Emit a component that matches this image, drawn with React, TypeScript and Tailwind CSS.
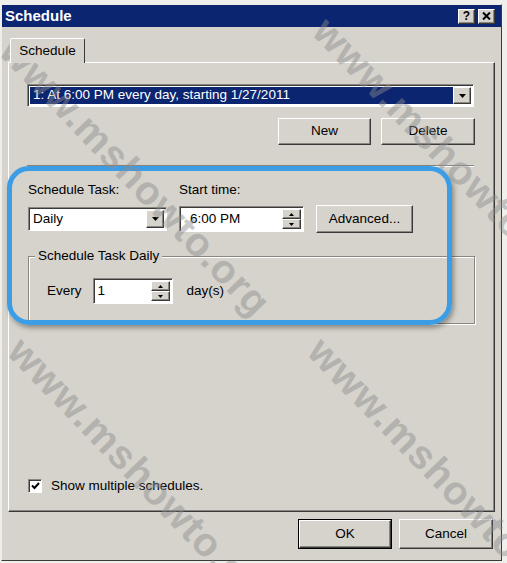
import React from "react";

const raised =
  "bg-[#d6d3cc] border border-t-white border-l-white border-b-[#3a3a3a] border-r-[#3a3a3a] shadow-[inset_-1px_-1px_0_#8a8780]";
const sunken =
  "bg-white border border-t-[#8a8780] border-l-[#8a8780] border-b-white border-r-white shadow-[inset_1px_1px_0_#3a3a3a]";

function DownTri({ w = 7, h = 4 }: { w?: number; h?: number }) {
  return (
    <svg width={w} height={h} viewBox={`0 0 ${w} ${h}`}>
      <polygon points={`0,0 ${w},0 ${w / 2},${h}`} fill="#000" />
    </svg>
  );
}
function UpTri({ w = 5, h = 3 }: { w?: number; h?: number }) {
  return (
    <svg width={w} height={h} viewBox={`0 0 ${w} ${h}`}>
      <polygon points={`0,${h} ${w},${h} ${w / 2},0`} fill="#000" />
    </svg>
  );
}

function ArrowBtn() {
  return (
    <div className={`${raised} w-[18px] h-full flex items-center justify-center`}>
      <DownTri />
    </div>
  );
}

function Spin() {
  return (
    <div className="w-[19px] h-full flex flex-col">
      <div className={`${raised} flex-1 flex items-center justify-center`}>
        <UpTri />
      </div>
      <div className={`${raised} flex-1 flex items-center justify-center`}>
        <DownTri w={5} h={3} />
      </div>
    </div>
  );
}

function Btn({ children, className = "" }: { children: React.ReactNode; className?: string }) {
  return (
    <div className={`${raised} flex items-center justify-center ${className}`}>{children}</div>
  );
}

function Watermark({ left, top }: { left: number; top: number }) {
  return (
    <div
      className="absolute pointer-events-none whitespace-nowrap font-['Liberation_Sans',Arial,sans-serif] font-bold text-[40px] leading-none text-[#8c8c8c] opacity-45 origin-top-left rotate-[46deg] tracking-[1px]"
      style={{ left, top }}
    >
      www.mshowto.org
    </div>
  );
}

export default function App() {
  return (
    <div className="relative w-[507px] h-[563px] overflow-hidden bg-[#efefec] font-['Liberation_Sans',Arial,sans-serif] text-[13.5px] text-black">
      <div className="h-[4px]" />
      <div className="ml-[1px] mr-[5px] h-[557px] bg-[#d6d3cc] border border-t-[#ececec] border-l-[#ececec] border-r-[#3a3a3a] border-b-[#3a3a3a] flex flex-col">
        {/* title bar */}
        <div className="h-[22px] bg-[#0c2570] flex items-center justify-between pl-[3px] pr-[6px]">
          <span className="text-white font-bold text-[15px] font-['Liberation_Sans',Arial,sans-serif]">
            Schedule
          </span>
          <div className="flex gap-[3px]">
            <div className={`${raised} w-[17px] h-[15px] flex items-center justify-center text-[12px] font-bold leading-none`}>?</div>
            <div className={`${raised} w-[17px] h-[15px] flex items-center justify-center`}>
              <svg width="9" height="8" viewBox="0 0 9 8">
                <path d="M1 0.5 L8 7.5 M8 0.5 L1 7.5" stroke="#000" strokeWidth="2" />
              </svg>
            </div>
          </div>
        </div>

        {/* tab */}
        <div className="mt-[11px] ml-[8px] relative z-10 w-[75px] h-[25px] -mb-[1px] bg-[#d6d3cc] border border-b-0 border-t-white border-l-white border-r-[#3a3a3a] rounded-t-[2px] flex items-center justify-center">
          Schedule
        </div>

        {/* panel */}
        <div className="ml-[6px] w-[487px] h-[450px] border border-t-white border-l-white border-r-[#3a3a3a] border-b-[#3a3a3a] shadow-[inset_-1px_-1px_0_#8a8780] flex flex-col">
          {/* schedule dropdown */}
          <div className={`${sunken} mt-[21px] ml-[18px] w-[447px] h-[23px] flex items-stretch p-[2px]`}>
            <div className="flex-1 bg-[#0c2570] text-white flex items-center pl-[3px]">
              1: At 6:00 PM every day, starting 1/27/2011
            </div>
            <ArrowBtn />
          </div>
          {/* New / Delete */}
          <div className="mt-[11px] flex justify-end gap-[10px] pr-[19px]">
            <Btn className="w-[93px] h-[27px]">New</Btn>
            <Btn className="w-[94px] h-[27px]">Delete</Btn>
          </div>
          {/* separator */}
          <div className="mt-[20px] ml-[18px] w-[447px] h-[2px] border-t border-t-[#8a8780] border-b border-b-white" />

          {/* labels */}
          <div className="mt-[15px] ml-[19px] flex h-[17px] items-center">
            <div className="w-[151px]">Schedule Task:</div>
            <div>Start time:</div>
          </div>
          {/* controls */}
          <div className="mt-[6px] ml-[19px] flex items-center h-[28px]">
            <div className={`${sunken} w-[139px] h-[24px] flex items-stretch p-[2px]`}>
              <div className="flex-1 flex items-center pl-[2px]">Daily</div>
              <ArrowBtn />
            </div>
            <div className={`${sunken} ml-[12px] w-[125px] h-[26px] flex items-stretch p-[2px]`}>
              <div className="flex-1 flex items-center pl-[8px]">6:00 PM</div>
              <Spin />
            </div>
            <Btn className="ml-[12px] w-[97px] h-[28px]">Advanced...</Btn>
          </div>

          {/* group box */}
          <div className="relative mt-[23px] ml-[19px] w-[447px] h-[68px] border border-[#8a8780] shadow-[inset_1px_1px_0_white,1px_1px_0_white]">
            <div className="absolute -top-[10px] left-[6px] px-[3px] bg-[#d6d3cc] leading-[18px]">Schedule Task Daily</div>
            <div className="mt-[21px] ml-[18px] flex items-center h-[26px]">
              <span>Every</span>
              <div className={`${sunken} ml-[11px] w-[80px] h-[26px] flex items-stretch p-[2px]`}>
                <div className="flex-1 flex items-center pl-[2px]">1</div>
                <Spin />
              </div>
              <span className="ml-[14px]">day(s)</span>
            </div>
          </div>

          {/* checkbox */}
          <div className="mt-auto mb-[15px] ml-[19px] flex items-center gap-[9px]">
            <div className={`${sunken} w-[14px] h-[14px] flex items-center justify-center`}>
              <svg width="9" height="8" viewBox="0 0 9 8">
                <path d="M1 3.5 L3.5 6 L8 1" stroke="#000" strokeWidth="2" fill="none" />
              </svg>
            </div>
            <span>Show multiple schedules.</span>
          </div>
        </div>

        {/* OK / Cancel */}
        <div className="mt-[7px] flex justify-end gap-[7px] pr-[8px]">
          <div className="border border-black">
            <Btn className="w-[92px] h-[28px]">OK</Btn>
          </div>
          <Btn className="w-[94px] h-[30px]">Cancel</Btn>
        </div>
      </div>

      {/* highlight */}
      <div className="absolute left-[7px] top-[166px] w-[445px] h-[159px] rounded-[22px] border-[5px] border-[#3a9de6] shadow-[2px_3px_5px_rgba(0,0,0,0.35)] pointer-events-none" />

      {/* watermarks */}
      <Watermark left={22} top={30} />
      <Watermark left={335} top={10} />
      <Watermark left={330} top={330} />
      <Watermark left={30} top={330} />
    </div>
  );
}
